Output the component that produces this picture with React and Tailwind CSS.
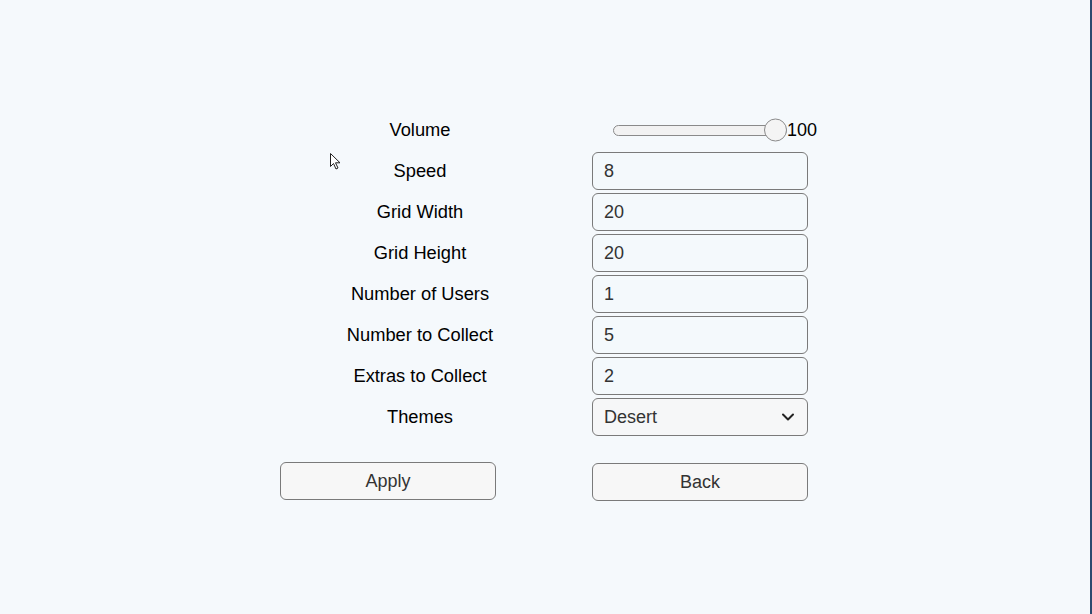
import React from "react";
import { ChevronDown } from "lucide-react";

const rows = [
  { label: "Speed", value: "8" },
  { label: "Grid Width", value: "20" },
  { label: "Grid Height", value: "20" },
  { label: "Number of Users", value: "1" },
  { label: "Number to Collect", value: "5" },
  { label: "Extras to Collect", value: "2" },
];

const font = { fontFamily: '"Liberation Sans", Arial, sans-serif' };

function Label({ children }) {
  return (
    <div className="w-[240px] ml-[300px] mr-[52px] text-center text-[18.3px] text-black leading-none">
      {children}
    </div>
  );
}

export default function App() {
  return (
    <div
      className="relative w-[1092px] h-[614px] overflow-hidden bg-[#f5f9fc] border-r-2 border-[#2c4a6f]"
      style={font}
    >
      {/* mouse cursor */}
      <svg
        className="absolute left-[330px] top-[153px]"
        width="12"
        height="18"
        viewBox="0 0 12 18"
      >
        <path
          d="M0.5 0.5 L0.5 13.5 L3.5 10.5 L6 16 L8 15 L5.5 9.8 L10 9.8 Z"
          fill="#fff"
          stroke="#222"
          strokeWidth="1"
        />
      </svg>

      <div className="flex flex-col gap-[3px] pt-[111px]">
        {/* Volume */}
        <div className="flex items-center h-[38px]">
          <Label>Volume</Label>
          <div className="flex items-center">
            <div className="relative ml-[21px] w-[174px] h-[11px] rounded-full border border-[#8a8a8a] bg-[#f2f2f2]">
              <div className="absolute -right-[1px] top-1/2 -translate-y-1/2 w-[23px] h-[23px] rounded-full border border-[#8a8a8a] bg-[#f4f4f4]" />
            </div>
            <span className="text-[18px] text-black">100</span>
          </div>
        </div>

        {rows.map((r) => (
          <div key={r.label} className="flex items-center h-[38px]">
            <Label>{r.label}</Label>
            <input
              readOnly
              value={r.value}
              className="w-[216px] h-[38px] px-[11px] rounded-[6px] border border-[#7a7a7a] bg-[#f4f9fc] text-[18px] text-[#333] outline-none"
              style={font}
            />
          </div>
        ))}

        {/* Themes */}
        <div className="flex items-center h-[38px]">
          <Label>Themes</Label>
          <div className="w-[216px] h-[38px] pl-[11px] pr-[9px] rounded-[6px] border border-[#7a7a7a] bg-[#f6f7f8] flex items-center justify-between text-[18px] text-[#333]">
            <span>Desert</span>
            <ChevronDown className="w-[20px] h-[20px] text-[#222]" strokeWidth={2.4} />
          </div>
        </div>
      </div>

      <div className="flex mt-[26px] items-start">
        <button className="ml-[280px] w-[216px] h-[38px] rounded-[6px] border border-[#7a7a7a] bg-[#f7f7f7] text-[18px] text-[#333]">
          Apply
        </button>
        <button className="ml-[96px] mt-[1px] w-[216px] h-[38px] rounded-[6px] border border-[#7a7a7a] bg-[#f7f7f7] text-[18px] text-[#333]">
          Back
        </button>
      </div>
    </div>
  );
}
